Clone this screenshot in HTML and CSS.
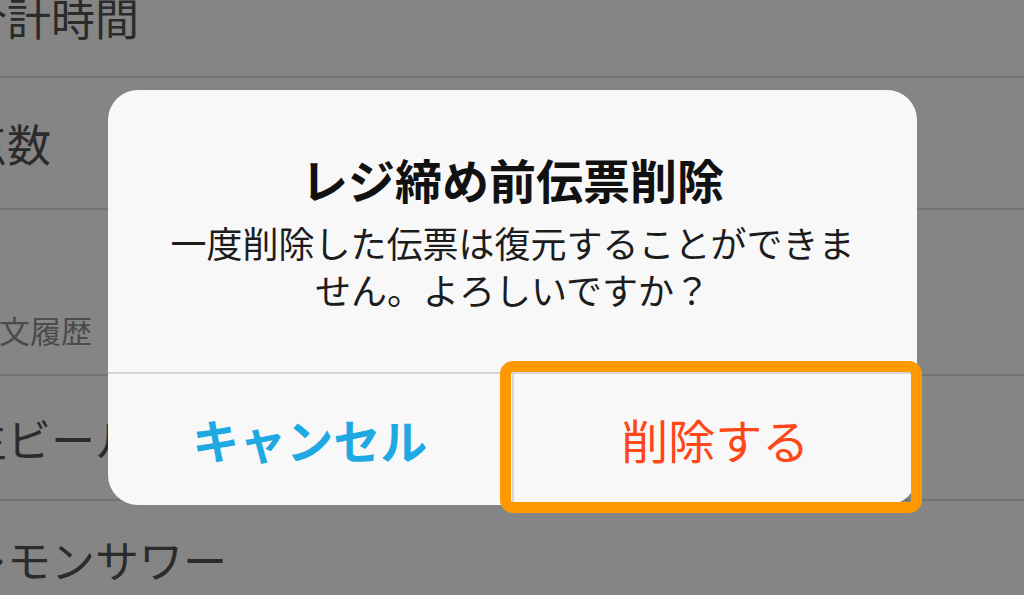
FILE: index.html
```html
<!DOCTYPE html>
<html lang="ja">
<head>
<meta charset="utf-8">
<title>レジ締め前伝票削除</title>
<link rel="stylesheet" href="styles.css">
</head>
<body>
<div class="screen">
  <ul class="list">
    <li class="row row-first"><span class="label label-top">合計時間</span></li>
    <li class="row row-count"><span class="label">点数</span></li>
    <li class="row row-section"><span class="section-label">注文履歴</span></li>
    <li class="row row-item"><span class="label">生ビール</span></li>
    <li class="row row-item"><span class="label">レモンサワー</span></li>
  </ul>

  <div class="dialog" role="alertdialog">
    <div class="dialog-body">
      <h1 class="dialog-title">レジ締め前伝票削除</h1>
      <p class="dialog-message">一度削除した伝票は復元することができま<br>せん。よろしいですか？</p>
    </div>
    <div class="dialog-actions">
      <button class="action action-cancel">キャンセル</button>
      <button class="action action-delete">削除する</button>
    </div>
  </div>

  <div class="highlight"></div>
</div>
</body>
</html>
```

FILE: styles.css
```css
html, body {
  margin: 0;
  padding: 0;
}

body {
  width: 1024px;
  height: 595px;
  overflow: hidden;
  background: #858585;
  font-family: "Noto Sans CJK JP", "Noto Sans", sans-serif;
}

.screen {
  position: relative;
  width: 1024px;
  height: 595px;
  overflow: hidden;
}

.list {
  list-style: none;
  margin: 0;
  padding: 0;
}

.row {
  box-sizing: border-box;
  display: flex;
  align-items: center;
  border-bottom: 2px solid #737373;
  color: #2b2b2b;
}

.label {
  margin-left: -37px;
  font-size: 44px;
  line-height: 44px;
  white-space: nowrap;
}

.row-first {
  height: 78px;
  align-items: flex-start;
}

.label-top {
  margin-top: -5px;
}

.row-count {
  height: 132px;
}

.row-section {
  height: 166px;
  align-items: flex-end;
  padding-bottom: 28px;
}

.section-label {
  margin-left: -32px;
  font-size: 31px;
  line-height: 32px;
  color: #4b4b4b;
  white-space: nowrap;
}

.row-item {
  height: 125px;
}

.row-item:last-child {
  padding-bottom: 8px;
}

.dialog {
  position: absolute;
  left: 108px;
  top: 90px;
  width: 809px;
  height: 415px;
  box-sizing: border-box;
  border-radius: 30px;
  background: #f8f8f8;
  display: flex;
  flex-direction: column;
  overflow: hidden;
}

.dialog-body {
  box-sizing: border-box;
  height: 282px;
  padding: 61px 50px 0;
  text-align: center;
}

.dialog-title {
  margin: 0;
  font-size: 47px;
  line-height: 56px;
  font-weight: 700;
  color: #111111;
}

.dialog-message {
  margin: 12px 0 0;
  font-size: 36px;
  line-height: 47px;
  font-weight: 400;
  color: #1c1c1c;
  white-space: nowrap;
}

.dialog-actions {
  flex: 1;
  display: flex;
  border-top: 2px solid #d6d6d6;
}

.action {
  flex: 1;
  margin: 0;
  padding: 0 0 2px;
  border: none;
  background: transparent;
  font-family: "Noto Sans CJK JP", "Noto Sans", sans-serif;
  font-size: 47px;
  line-height: 56px;
  display: flex;
  align-items: center;
  justify-content: center;
}

.action-cancel {
  color: #1fa9e2;
  font-weight: 700;
  border-right: 2px solid #d6d6d6;
}

.action-delete {
  color: #ff4619;
  font-weight: 400;
}

.highlight {
  position: absolute;
  left: 500px;
  top: 361px;
  width: 422px;
  height: 152px;
  box-sizing: border-box;
  border: 11px solid #ff9900;
  border-radius: 13px;
}
```
